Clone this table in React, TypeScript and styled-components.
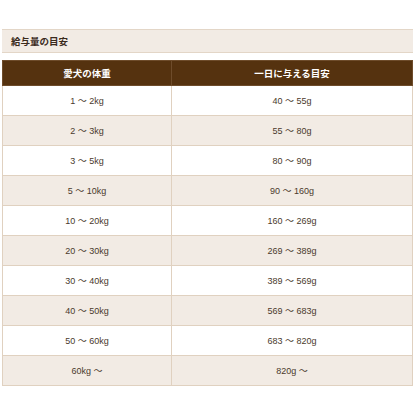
import styled, { createGlobalStyle } from 'styled-components';

const GlobalStyle = createGlobalStyle`
  html, body {
    margin: 0;
    padding: 0;
    background: #ffffff;
  }
  body {
    font-family: 'Liberation Sans', 'Noto Sans CJK JP', sans-serif;
  }
`;

const Wrapper = styled.div`
  width: 411px;
  padding: 29px 0 0 2px;
`;

const Heading = styled.h3`
  margin: 0 0 7px;
  height: 22px;
  padding: 0 9px;
  display: flex;
  align-items: center;
  background: #f2ebe4;
  border-top: 1px solid #e3d6c7;
  border-bottom: 1px solid #e3d6c7;
  color: #3a2a1c;
  font-size: 9.5px;
  font-weight: bold;
`;

const Table = styled.table`
  width: 100%;
  border-collapse: collapse;
  table-layout: fixed;
  border: 1px solid #ddccba;
`;

const HeadCell = styled.th`
  height: 24px;
  padding: 0;
  background: #55320f;
  color: #ffffff;
  font-size: 9.5px;
  font-weight: bold;
  text-align: center;
  border: 1px solid #6e4c2b;
  border-left-color: #a58a6c;
  &:first-child {
    border-left-color: #6e4c2b;
  }
`;

const Row = styled.tr<{ $shaded: boolean }>`
  background: ${(p) => (p.$shaded ? '#f2ebe4' : '#ffffff')};
`;

const Cell = styled.td`
  height: 29px;
  padding: 0;
  text-align: center;
  color: #4a3a2c;
  font-size: 9px;
  border: 1px solid #e0d1c0;
`;

const rows = [
  ['1 〜 2kg', '40 〜 55g'],
  ['2 〜 3kg', '55 〜 80g'],
  ['3 〜 5kg', '80 〜 90g'],
  ['5 〜 10kg', '90 〜 160g'],
  ['10 〜 20kg', '160 〜 269g'],
  ['20 〜 30kg', '269 〜 389g'],
  ['30 〜 40kg', '389 〜 569g'],
  ['40 〜 50kg', '569 〜 683g'],
  ['50 〜 60kg', '683 〜 820g'],
  ['60kg 〜', '820g 〜'],
];

export default function App() {
  return (
    <>
      <GlobalStyle />
      <Wrapper>
        <Heading>給与量の目安</Heading>
        <Table>
          <colgroup>
            <col style={{ width: '169px' }} />
            <col />
          </colgroup>
          <thead>
            <tr>
              <HeadCell>愛犬の体重</HeadCell>
              <HeadCell>一日に与える目安</HeadCell>
            </tr>
          </thead>
          <tbody>
            {rows.map(([weight, amount], i) => (
              <Row key={weight} $shaded={i % 2 === 1}>
                <Cell>{weight}</Cell>
                <Cell>{amount}</Cell>
              </Row>
            ))}
          </tbody>
        </Table>
      </Wrapper>
    </>
  );
}
